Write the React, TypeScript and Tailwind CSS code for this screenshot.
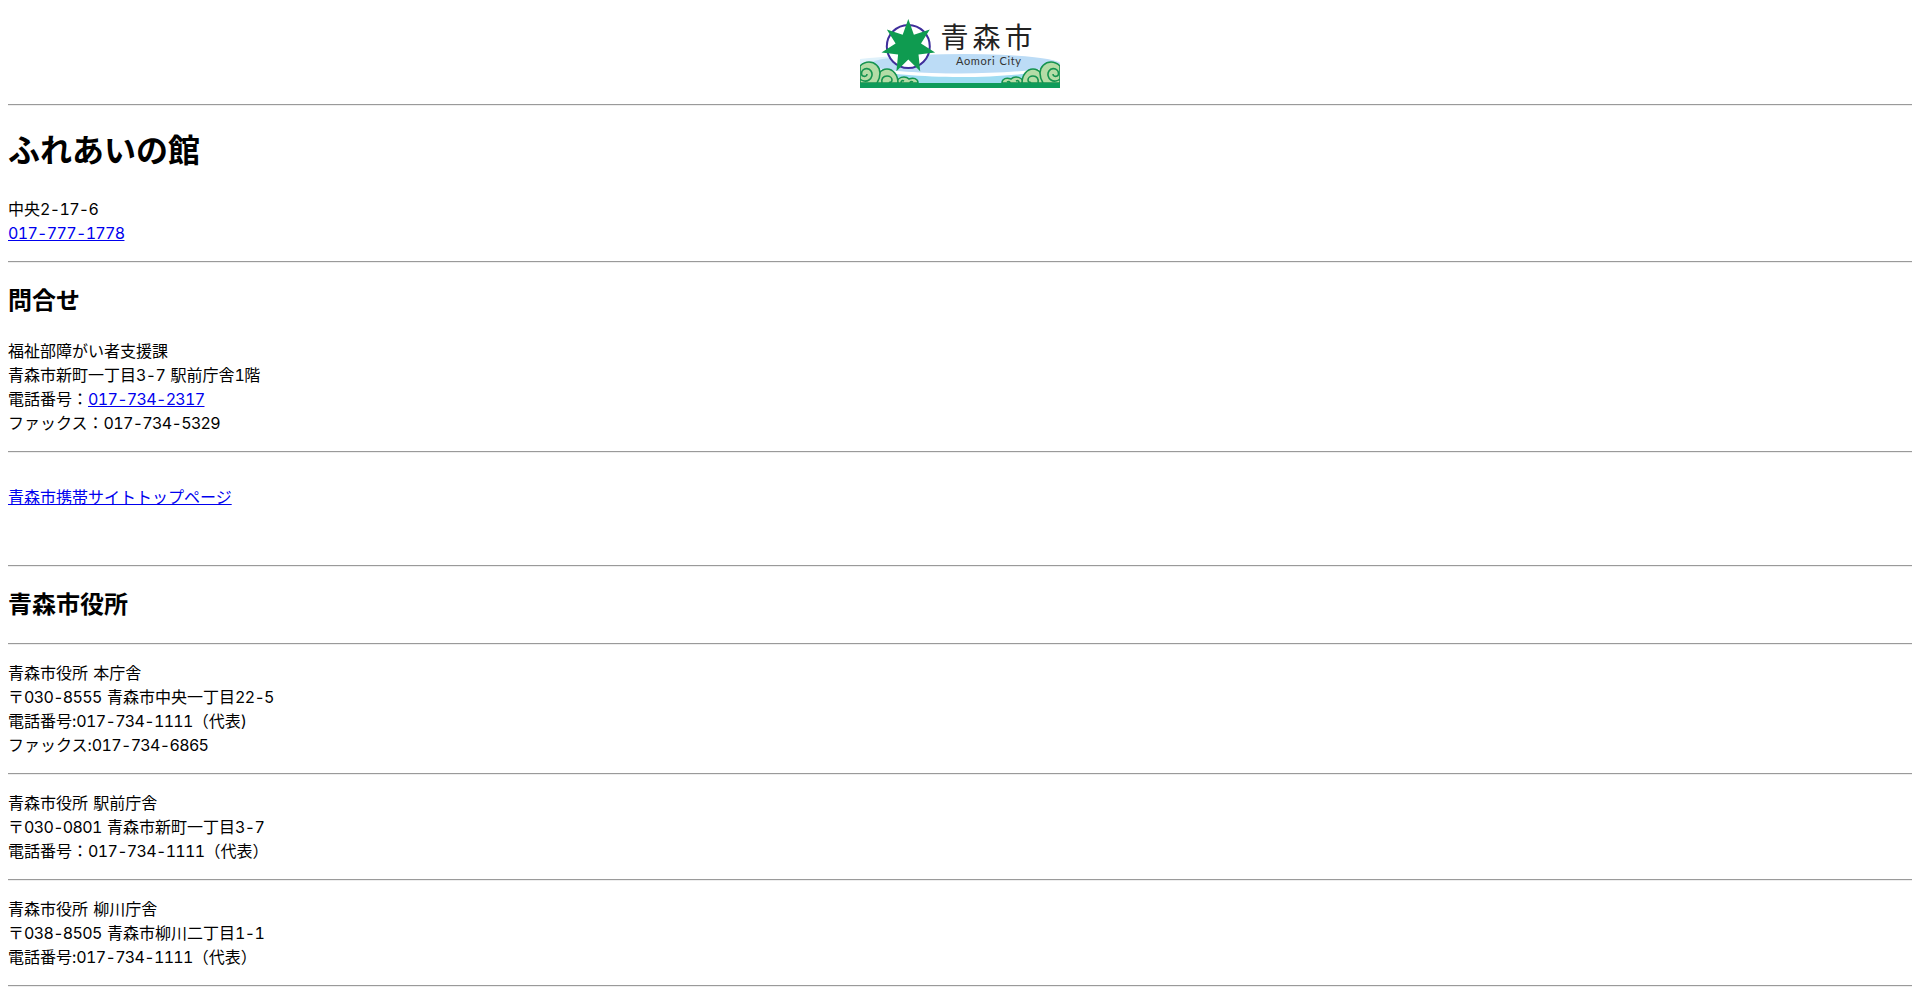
import type { ReactNode } from "react";

function Rule() {
  return <hr className="my-0 h-0 border-t border-b border-t-[#9a9a9a] border-b-[#eeeeee]" />;
}

// Number runs are tightened so the Inter digits take the width they have in the picture
function withNumbers(text: string): ReactNode[] {
  return text.split(/([\d-]+)/).map((part, i) =>
    /[\d-]/.test(part) ? (
      <span key={i} className="tracking-[-0.67px]">
        {part}
      </span>
    ) : (
      part
    ),
  );
}

function Wave() {
  return (
    <g fill="#b4dca6" stroke="#14934f" strokeWidth="1.6">
      <path d="M36 75c1-3 4-6 8-6 2 0 4 1 5 2 3-1 6-1 8 1 1 1 1 2 1 3z" />
      <path d="M16 75c0-8 5-14 11-14 6 0 11 6 11 14z" />
      <path d="M0 58c3-3 6-4 9-4 6 0 11 5 11 11 0 4-1 7-3 10H0z" />
      <path fill="none" d="M0 71c2 2 6 3 9 1 3-2 4-6 2-9-2-3-6-3-8-1-2 2-2 5 0 6 2 1 4 0 4-2" />
      <path fill="none" d="M22 75c-1-4 1-7 5-7 3 0 5 2 5 4 0 2-2 3-3 2" />
      <path fill="none" d="M41 75c0-2 1-3 3-2M50 75c0-1 1-2 3-1" />
    </g>
  );
}

function Logo() {
  const points: string[] = [];
  for (let i = 0; i < 14; i++) {
    const r = i % 2 === 0 ? 27.5 : 13;
    const a = (i * Math.PI) / 7;
    points.push(`${(48.3 + r * Math.sin(a)).toFixed(1)},${(38.5 - r * Math.cos(a)).toFixed(1)}`);
  }
  return (
    <svg width="200" height="80" viewBox="0 0 200 80" className="block">
      <defs>
        <clipPath id="logo-box">
          <rect x="0" y="0" width="200" height="75.5" />
        </clipPath>
      </defs>
      <path d="M0 51C50 45 150 44 200 54V75.5H0z" fill="#dff1fa" />
      <ellipse cx="105" cy="56" rx="95" ry="10" fill="#bcdcf6" />
      <path d="M0 58C50 68 150 68 200 58V75.5H0z" fill="#ffffff" />
      <path d="M0 60C50 72 150 72 200 60V75.5H0z" fill="#a0dcf2" />
      <circle cx="48.3" cy="38.5" r="21.5" fill="#ffffff" stroke="#3f2e9b" strokeWidth="2" />
      <polygon points={points.join(" ")} fill="#0f9b50" />
      <text x="80.5" y="39.5" fontSize="28" letterSpacing="4" fill="#222222" className="font-['Noto_Sans_CJK_JP',sans-serif] font-normal">
        青森市
      </text>
      <text x="96" y="56.5" fontSize="11" textLength="65" fill="#333333" className="font-['Lato',sans-serif]">
        Aomori City
      </text>
      <g clipPath="url(#logo-box)">
        <Wave />
        <g transform="translate(200 0) scale(-1 1)">
          <Wave />
        </g>
      </g>
      <rect x="0" y="75" width="200" height="5" fill="#0f9b5a" />
    </svg>
  );
}

function Phone({ number }: { number: string }) {
  return (
    <a href="#" className="text-[#0000ee] underline">
      {withNumbers(number)}
    </a>
  );
}

function Office({ lines }: { lines: string[] }) {
  return (
    <p className="my-4">
      {lines.map((line) => (
        <span key={line} className="block">
          {withNumbers(line)}
        </span>
      ))}
    </p>
  );
}

export default function App() {
  return (
    <div className="m-2 bg-white text-[16px] leading-6 text-black tabular-nums [word-spacing:1px] font-['Inter','Noto_Sans_CJK_JP',sans-serif]">
      <div className="flex h-[88px] justify-center">
        <Logo />
      </div>
      <div className="mt-2">
        <Rule />
      </div>
      <h1 className="my-[21.44px] text-[32px] leading-[48px] font-bold">ふれあいの館</h1>
      <p className="my-4">
        <span className="block">{withNumbers("中央2-17-6")}</span>
        <span className="block">
          <Phone number="017-777-1778" />
        </span>
      </p>
      <Rule />
      <h2 className="my-[19.92px] text-[24px] leading-9 font-bold">問合せ</h2>
      <p className="my-4">
        <span className="block">福祉部障がい者支援課</span>
        <span className="block">{withNumbers("青森市新町一丁目3-7 駅前庁舎1階")}</span>
        <span className="block">
          電話番号：
          <Phone number="017-734-2317" />
        </span>
        <span className="block">{withNumbers("ファックス：017-734-5329")}</span>
      </p>
      <Rule />
      <p className="mt-8 mb-14">
        <a href="#" className="text-[#0000ee] underline">
          青森市携帯サイトトップページ
        </a>
      </p>
      <Rule />
      <h2 className="my-[19.92px] text-[24px] leading-9 font-bold">青森市役所</h2>
      <Rule />
      <Office lines={["青森市役所 本庁舎", "〒030-8555 青森市中央一丁目22-5", "電話番号:017-734-1111（代表)", "ファックス:017-734-6865"]} />
      <Rule />
      <Office lines={["青森市役所 駅前庁舎", "〒030-0801 青森市新町一丁目3-7", "電話番号：017-734-1111（代表）"]} />
      <Rule />
      <Office lines={["青森市役所 柳川庁舎", "〒038-8505 青森市柳川二丁目1-1", "電話番号:017-734-1111（代表）"]} />
      <Rule />
    </div>
  );
}
